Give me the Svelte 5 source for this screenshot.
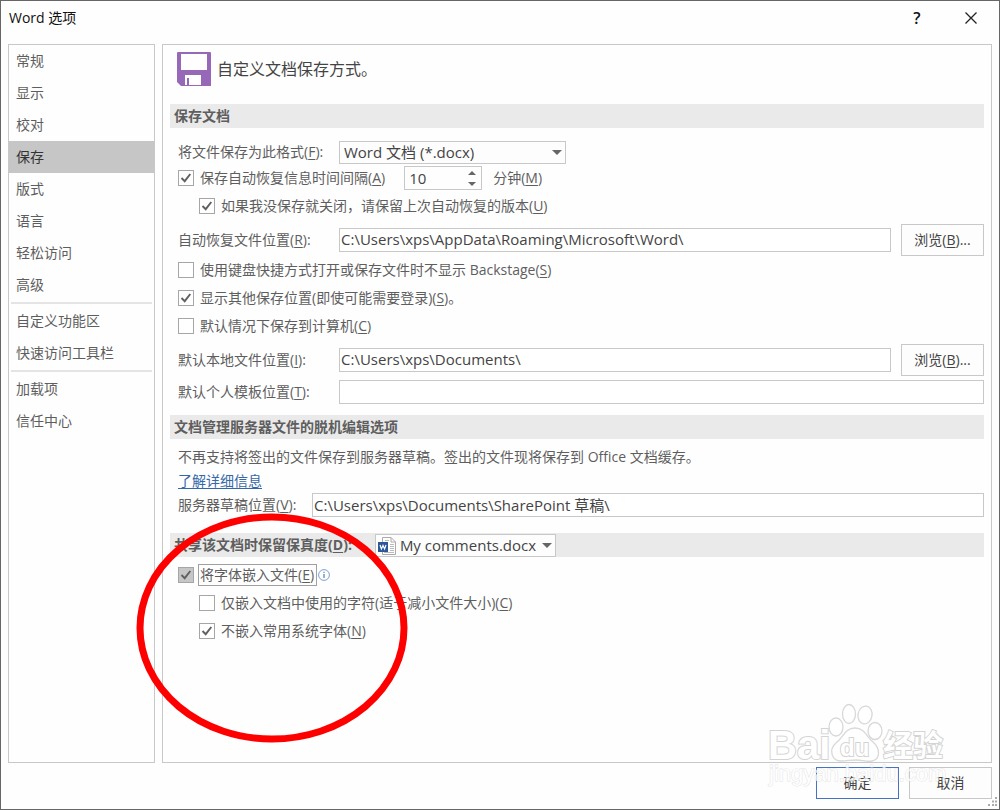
<script lang="ts">
	// --- Data ---
	const groups = [
		['常规', '显示', '校对', '保存', '版式', '语言', '轻松访问', '高级'],
		['自定义功能区', '快速访问工具栏'],
		['加载项', '信任中心']
	];

	// --- State ---
	let current = $state('保存');
	let format = $state('docx');
	let minutes = $state(10);
	let recoverPath = $state('C:\\Users\\xps\\AppData\\Roaming\\Microsoft\\Word\\');
	let localPath = $state('C:\\Users\\xps\\Documents\\');
	let templatePath = $state('');
	let draftPath = $state('C:\\Users\\xps\\Documents\\SharePoint 草稿\\');
	let options = $state({
		autoRecover: true,
		keepLast: true,
		noBackstage: false,
		showPlaces: true,
		saveLocal: false,
		embed: true,
		onlyUsed: false,
		skipSystem: true
	});

	type OptionName = keyof typeof options;
</script>

{#snippet key(letter: string)}(<u>{letter}</u>){/snippet}

{#snippet check(name: OptionName, text: string, letter: string, tail = '')}
	<label class="check">
		<span class="box">
			<input type="checkbox" bind:checked={options[name]} />
			<svg viewBox="0 0 16 16" width="16" height="16">
				<path d="M3.5 8 L6.7 11.2 L12.3 4" fill="none" stroke="#606060" stroke-width="1.9" />
			</svg>
		</span>
		<span class="check-text">{text}{@render key(letter)}{tail}</span>
	</label>
{/snippet}

<div class="dialog">
	<header>
		<h1>Word 选项</h1>
		<button class="title-button" aria-label="帮助">?</button>
		<button class="title-button" aria-label="关闭">
			<svg viewBox="0 0 14 14" width="14" height="14">
				<path d="M1.5 1.5 L12.5 12.5 M12.5 1.5 L1.5 12.5" stroke="#222" stroke-width="1.3" />
			</svg>
		</button>
	</header>

	<div class="body">
		<nav>
			{#each groups as group}
				<ul>
					{#each group as item}
						<li>
							<button class:active={current === item} onclick={() => (current = item)}>
								{item}
							</button>
						</li>
					{/each}
				</ul>
			{/each}
		</nav>

		<main>
			<div class="intro">
				<svg viewBox="0 0 34 34" width="34" height="34">
					<path
						fill="#9768b8"
						fill-rule="evenodd"
						d="M1 0 H33 Q34 0 34 1 V34 H4 L0 30 V1 Q0 0 1 0 Z M4 2 V18 H30 V2 Z M8 23 V33 H24 V23 Z"
					/>
					<rect x="10" y="26" width="2" height="7" fill="#9768b8" />
				</svg>
				<p>自定义文档保存方式。</p>
			</div>

			<section>
				<h2>保存文档</h2>
				<div class="fields save">
					<div class="row short">
						<label class="name" for="format">将文件保存为此格式{@render key('F')}:</label>
						<span class="select format">
							<select id="format" bind:value={format}>
								<option value="docx">Word 文档 (*.docx)</option>
							</select>
							<svg class="arrow" viewBox="0 0 10 5" width="10" height="5">
								<path d="M0 0 H10 L5 5 Z" fill="#666" />
							</svg>
						</span>
					</div>
					<div class="row option">
						{@render check('autoRecover', '保存自动恢复信息时间间隔', 'A')}
						<span class="spin">
							<input id="minutes" type="number" min="1" max="120" bind:value={minutes} />
							<span class="spin-buttons">
								<button aria-label="增加" onclick={() => (minutes += 1)}>
									<svg viewBox="0 0 8 4" width="8" height="4"><path d="M0 4 H8 L4 0 Z" fill="#666" /></svg>
								</button>
								<button aria-label="减少" onclick={() => (minutes -= 1)}>
									<svg viewBox="0 0 8 4" width="8" height="4"><path d="M0 0 H8 L4 4 Z" fill="#666" /></svg>
								</button>
							</span>
						</span>
						<label for="minutes">分钟{@render key('M')}</label>
					</div>
					<div class="row option nested">
						{@render check('keepLast', '如果我没保存就关闭，请保留上次自动恢复的版本', 'U')}
					</div>
					<div class="row tall">
						<label class="name" for="recover">自动恢复文件位置{@render key('R')}:</label>
						<input id="recover" class="path" type="text" bind:value={recoverPath} />
						<button class="push">浏览{@render key('B')}...</button>
					</div>
					<div class="row option">
						{@render check('noBackstage', '使用键盘快捷方式打开或保存文件时不显示 Backstage', 'S')}
					</div>
					<div class="row option">
						{@render check('showPlaces', '显示其他保存位置(即使可能需要登录)', 'S', '。')}
					</div>
					<div class="row option">
						{@render check('saveLocal', '默认情况下保存到计算机', 'C')}
					</div>
					<div class="row tall">
						<label class="name" for="local">默认本地文件位置{@render key('I')}:</label>
						<input id="local" class="path" type="text" bind:value={localPath} />
						<button class="push">浏览{@render key('B')}...</button>
					</div>
					<div class="row last">
						<label class="name" for="template">默认个人模板位置{@render key('T')}:</label>
						<input id="template" class="path" type="text" bind:value={templatePath} />
					</div>
				</div>
			</section>

			<section>
				<h2>文档管理服务器文件的脱机编辑选项</h2>
				<div class="fields server">
					<p class="row short">不再支持将签出的文件保存到服务器草稿。签出的文件现将保存到 Office 文档缓存。</p>
					<p class="row short"><a href="#details">了解详细信息</a></p>
					<div class="row short">
						<label class="name draft" for="draft">服务器草稿位置{@render key('V')}:</label>
						<input id="draft" class="path" type="text" bind:value={draftPath} />
					</div>
				</div>
			</section>

			<section>
				<h2>
					<label for="document">共享该文档时保留保真度{@render key('D')}:</label>
					<span class="select document">
						<svg class="file" viewBox="0 0 18 18" width="18" height="18">
							<path d="M4.5 0.5 H13 L17.5 5 V17.5 H4.5 Z" fill="#fff" stroke="#aaa" />
							<path d="M13 0.5 V5 H17.5" fill="none" stroke="#aaa" />
							<path d="M7 3.5 H11 M12 7.5 H16 M12 9.5 H16 M12 11.5 H16 M12 13.5 H16 M6 15.5 H16" stroke="#bbb" />
							<rect x="0" y="5" width="10" height="10" fill="#2b579a" />
							<path d="M2 8 L3.4 12 L5 8.5 L6.6 12 L8 8" fill="none" stroke="#fff" stroke-width="1.2" />
						</svg>
						<select id="document">
							<option>My comments.docx</option>
						</select>
						<svg class="arrow" viewBox="0 0 10 5" width="10" height="5">
							<path d="M0 0 H10 L5 5 Z" fill="#666" />
						</svg>
					</span>
				</h2>
				<div class="fields share">
					<div class="row option embed">
						{@render check('embed', '将字体嵌入文件', 'E')}
						<svg viewBox="0 0 12 12" width="12" height="12">
							<circle cx="6" cy="6" r="5.4" fill="#fff" stroke="#7d9fd3" />
							<path d="M6 5 V9 M6 2.8 V4" stroke="#4f7fc4" stroke-width="1.2" />
						</svg>
					</div>
					<div class="row option nested">
						{@render check('onlyUsed', '仅嵌入文档中使用的字符(适于减小文件大小)', 'C')}
					</div>
					<div class="row option nested">
						{@render check('skipSystem', '不嵌入常用系统字体', 'N')}
					</div>
				</div>
				<!-- Highlight ring around the font options -->
				<svg class="ring" viewBox="0 0 272 230" width="272" height="230">
					<ellipse cx="136" cy="115" rx="132" ry="111" fill="none" stroke="#f00" stroke-width="7" />
				</svg>
			</section>
		</main>
	</div>

	<footer>
		<button class="push primary">确定</button>
		<button class="push">取消</button>
	</footer>

	<svg class="watermark" viewBox="0 0 190 96" width="190" height="96">
		<g fill="#fff" stroke="#d8d8d8" stroke-width="1.3">
			<ellipse cx="75" cy="36" rx="7" ry="9" />
			<ellipse cx="88" cy="23" rx="6.5" ry="9.5" />
			<ellipse cx="104" cy="24" rx="7" ry="9" transform="rotate(10 104 24)" />
			<ellipse cx="114" cy="40" rx="7" ry="8.5" />
			<path d="M94 37 C84 37 82 47 75 52 C67 59 71 70 80 70 C86 70 90 69 95 69 C101 69 106 71 111 70 C120 68 119 57 112 51 C106 47 104 37 94 37 Z" />
		</g>
		<g class="mark">
			<text x="7" y="68" font-size="40">Bai</text>
			<text x="79" y="65" font-size="24">du</text>
			<text x="122" y="65" font-size="30">经验</text>
			<text class="site" x="8" y="90" font-size="22">jingyan.baidu.com</text>
		</g>
	</svg>
	<svg class="grip" viewBox="0 0 10 10" width="10" height="10">
		<path d="M7 1 H9 M4 4.5 H6 M7 4.5 H9 M0 8 H2 M4 8 H6 M7 8 H9" stroke="#aaa" stroke-width="2" />
	</svg>
</div>

<style>
	:global(body) {
		margin: 0;
		background: #fefefe;
	}
	.dialog {
		position: relative;
		display: flex;
		flex-direction: column;
		box-sizing: border-box;
		min-height: 100vh;
		padding: 0 7px 10px;
		border: 1px solid #666;
		background: #fefefe;
		color: #5e5e5e;
		font: 14px/20px 'Open Sans', 'Noto Sans CJK SC', sans-serif;
	}
	h1,
	h2,
	p,
	ul {
		margin: 0;
		padding: 0;
		list-style: none;
	}
	button,
	input,
	select {
		box-sizing: border-box;
		margin: 0;
		border: 1px solid #c8c8c8;
		border-radius: 0;
		background: #fdfdfd;
		color: #444;
		font: inherit;
	}
	u {
		text-underline-offset: 2px;
	}
	header {
		display: flex;
		align-items: center;
		height: 33px;
		margin-bottom: 10px;
	}
	h1 {
		flex: 1;
		padding-left: 1px;
		color: #111;
		font-size: 14px;
		font-weight: 400;
	}
	.title-button {
		display: grid;
		place-items: center;
		width: 54px;
		padding: 0;
		border: 0;
		background: none;
		color: #111;
		font-size: 16px;
		font-weight: 600;
	}
	.title-button:last-child {
		margin-right: -6px;
	}
	.body {
		flex: 1;
		display: grid;
		grid-template-columns: 147px minmax(0, 1fr);
		gap: 7px;
	}
	nav,
	main {
		border: 1px solid #c8c8c8;
	}
	nav ul + ul::before {
		content: '';
		display: block;
		height: 2px;
		margin: 1px 2px;
		background: #e4e4e4;
	}
	nav button {
		display: block;
		width: 100%;
		height: 32px;
		padding: 0 7px;
		border: 0;
		background: none;
		color: #5e5e5e;
		text-align: left;
	}
	nav .active {
		background: #c6c6c6;
		color: #333;
	}
	main {
		padding: 0 7px;
	}
	.intro {
		display: flex;
		align-items: center;
		gap: 6px;
		height: 48px;
		padding: 0 7px 11px;
		color: #444;
		font-size: 16px;
	}
	section {
		position: relative;
	}
	h2 {
		display: flex;
		align-items: center;
		gap: 23px;
		height: 24px;
		padding-left: 4px;
		background: #eaeaea;
		color: #5e5e5e;
		font-size: 14px;
		font-weight: 700;
	}
	.fields {
		padding-left: 8px;
	}
	.save {
		padding-top: 12px;
		padding-bottom: 7px;
	}
	.server {
		padding-top: 6px;
		padding-bottom: 16px;
	}
	.share {
		padding-top: 4px;
	}
	.row {
		display: flex;
		align-items: center;
	}
	.short {
		height: 24px;
	}
	.option {
		height: 28px;
	}
	.tall,
	.last {
		height: 32px;
	}
	.option + .tall {
		margin-top: 4px;
	}
	.nested {
		padding-left: 21px;
	}
	.name {
		width: 161px;
	}
	.draft {
		width: 134px;
	}
	.path {
		flex: 1;
		min-width: 0;
		height: 24px;
		padding: 0 1px 2px;
		background: #fff;
		font-size: 15px;
	}
	.push {
		width: 83px;
		height: 32px;
		padding: 0;
	}
	.path + .push {
		margin-left: 10px;
	}
	.select {
		position: relative;
		display: inline-flex;
	}
	.select select {
		width: 100%;
		height: 23px;
		padding: 0 16px 0 4px;
		font-size: 15px;
		appearance: none;
	}
	.arrow {
		position: absolute;
		top: 9px;
		right: 4px;
		pointer-events: none;
	}
	.format {
		width: 227px;
	}
	.document {
		width: 181px;
		font-weight: 400;
	}
	.document select {
		padding-left: 24px;
	}
	.file {
		position: absolute;
		top: 3px;
		left: 3px;
	}
	.check {
		display: flex;
		align-items: center;
		gap: 6px;
	}
	.box {
		display: grid;
	}
	.box > * {
		grid-area: 1 / 1;
	}
	.box input {
		width: 16px;
		height: 16px;
		border-color: #a6a6a6;
		background: #fff;
		appearance: none;
	}
	.box svg {
		visibility: hidden;
		pointer-events: none;
	}
	.box input:checked + svg {
		visibility: visible;
	}
	.embed .box input {
		background: #c6c6c6;
	}
	.embed .check {
		gap: 4px;
	}
	.embed .check-text {
		margin-right: 1px;
		padding: 0 2px 0 1px;
		border: 1px solid #a0a0a0;
	}
	.spin {
		display: flex;
		width: 78px;
		height: 24px;
		box-sizing: border-box;
		margin: 0 11px 0 19px;
		border: 1px solid #c8c8c8;
	}
	.spin input {
		flex: 1;
		min-width: 0;
		padding: 0 4px;
		border: 0;
		background: none;
		font-size: 15px;
		appearance: textfield;
	}
	.spin input::-webkit-inner-spin-button {
		appearance: none;
	}
	.spin-buttons {
		display: grid;
		width: 18px;
	}
	.spin-buttons button {
		display: grid;
		place-items: center;
		padding: 0;
		border: 0;
		background: none;
	}
	a {
		color: #3568a6;
		text-underline-offset: 2px;
	}
	.ring {
		position: absolute;
		top: -20px;
		left: -34px;
		pointer-events: none;
	}
	footer {
		display: flex;
		justify-content: flex-end;
		gap: 10px;
		padding-top: 4px;
	}
	.primary {
		border-color: #4472c4;
	}
	.watermark {
		position: absolute;
		right: 48px;
		bottom: 22px;
		pointer-events: none;
	}
	.mark {
		fill: #fff;
		stroke: #d4d4d4;
		stroke-width: 2px;
		paint-order: stroke;
		font-family: 'Liberation Sans', 'Noto Sans CJK SC', sans-serif;
		font-weight: 700;
	}
	.mark .site {
		stroke: #dcdcdc;
		stroke-width: 1px;
		font-weight: 400;
		opacity: 0.75;
	}
	.grip {
		position: absolute;
		right: 1px;
		bottom: 2px;
	}
</style>
